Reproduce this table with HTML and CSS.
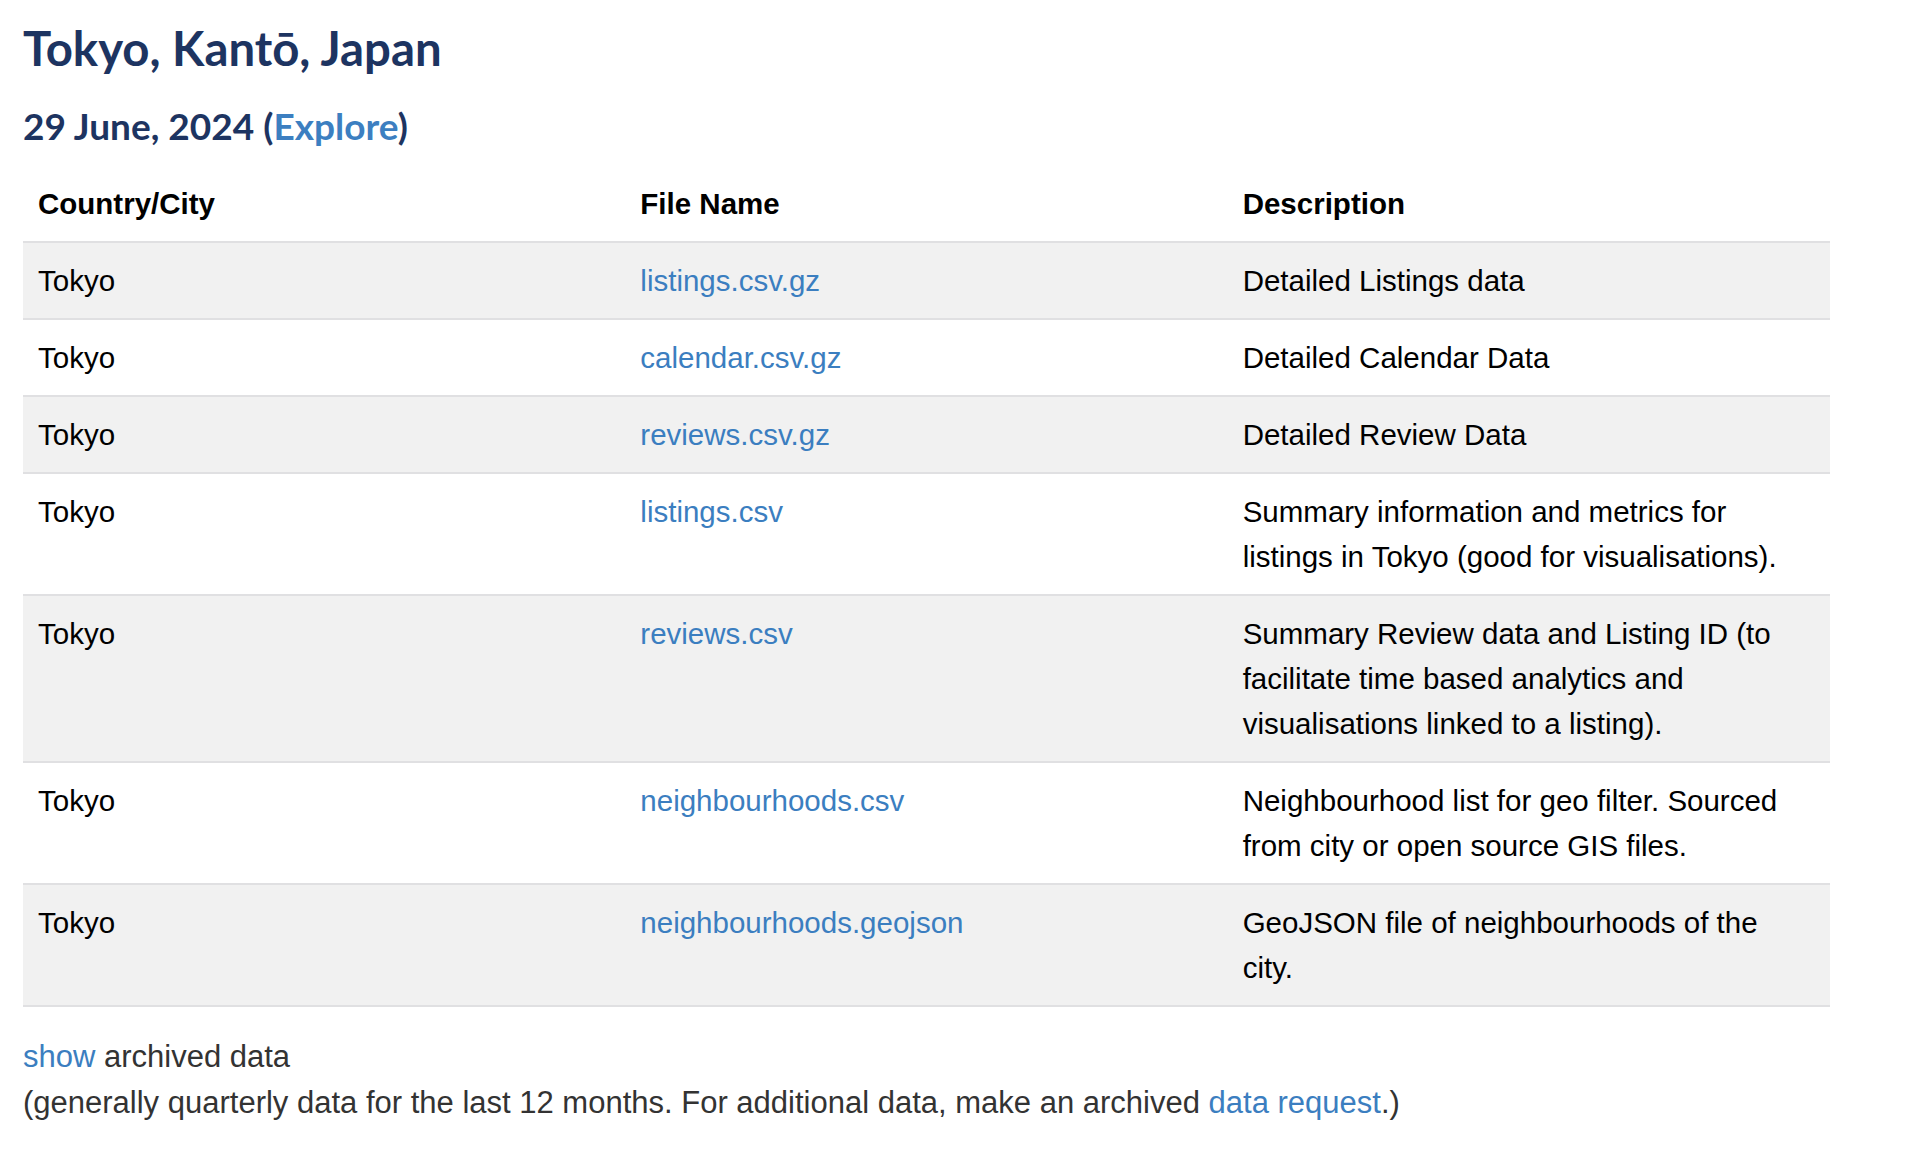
FILE: index.html
```html
<!DOCTYPE html>
<html lang="en">
<head>
<meta charset="utf-8">
<title>Tokyo, Kantō, Japan</title>
<link rel="stylesheet" href="styles.css">
</head>
<body>
<div class="page">
  <h1 class="city-title">Tokyo, Kantō, Japan</h1>
  <h2 class="date-title">29 June, 2024 (<a href="#">Explore</a>)</h2>
  <table class="data-table">
    <colgroup><col class="c"><col class="c"><col class="c"></colgroup>
    <thead>
      <tr><th>Country/City</th><th>File Name</th><th>Description</th></tr>
    </thead>
    <tbody>
      <tr><td>Tokyo</td><td><a href="#">listings.csv.gz</a></td><td>Detailed Listings data</td></tr>
      <tr><td>Tokyo</td><td><a href="#">calendar.csv.gz</a></td><td>Detailed Calendar Data</td></tr>
      <tr><td>Tokyo</td><td><a href="#">reviews.csv.gz</a></td><td>Detailed Review Data</td></tr>
      <tr><td>Tokyo</td><td><a href="#">listings.csv</a></td><td>Summary information and metrics for listings in Tokyo (good for visualisations).</td></tr>
      <tr><td>Tokyo</td><td><a href="#">reviews.csv</a></td><td>Summary Review data and Listing ID (to facilitate time based analytics and visualisations linked to a listing).</td></tr>
      <tr><td>Tokyo</td><td><a href="#">neighbourhoods.csv</a></td><td>Neighbourhood list for geo filter. Sourced from city or open source GIS files.</td></tr>
      <tr><td>Tokyo</td><td><a href="#">neighbourhoods.geojson</a></td><td>GeoJSON file of neighbourhoods of the city.</td></tr>
    </tbody>
  </table>
  <div class="archive">
    <p><a href="#">show</a> archived data</p>
    <p>(generally quarterly data for the last 12 months. For additional data, make an archived <a href="#">data request</a>.)</p>
  </div>
</div>
</body>
</html>
```
FILE: styles.css
```css
html, body {
  margin: 0;
  padding: 0;
  background: #ffffff;
}
body {
  font-family: "Liberation Sans", Arial, sans-serif;
  font-size: 29.5px;
  line-height: 45px;
  color: #333333;
}
a {
  color: #3b7ec0;
  text-decoration: none;
}
.page {
  padding: 0 23px;
  width: 1807px;
}
.city-title {
  font-family: Lato, "Open Sans", sans-serif;
  font-weight: 700;
  font-size: 47.3px;
  line-height: 55px;
  color: #1d3461;
  margin: 20px 0 0;
}
.date-title {
  font-family: Lato, "Open Sans", sans-serif;
  font-weight: 700;
  font-size: 37px;
  line-height: 41px;
  color: #1d3461;
  margin: 30px 0 0;
}
.date-title a {
  color: #3c7fc1;
}
.data-table {
  width: 1807px;
  table-layout: fixed;
  border-collapse: collapse;
  margin-top: 20px;
  color: #000000;
  border-bottom: 2px solid #e0e0e2;
}
.data-table .c {
  width: 33.333%;
}
.data-table th {
  text-align: left;
  font-weight: 700;
  padding: 15px 15px;
  vertical-align: bottom;
  border-bottom: 2px solid #e0e0e2;
}
.data-table td {
  padding: 15px 15px;
  vertical-align: top;
  border-top: 2px solid #e0e0e2;
}
.data-table tbody tr:nth-child(odd) {
  background: #f1f1f1;
}
.archive {
  margin-top: 27px;
  font-size: 31px;
}
.archive p {
  margin: 0;
  line-height: 46px;
}
```
